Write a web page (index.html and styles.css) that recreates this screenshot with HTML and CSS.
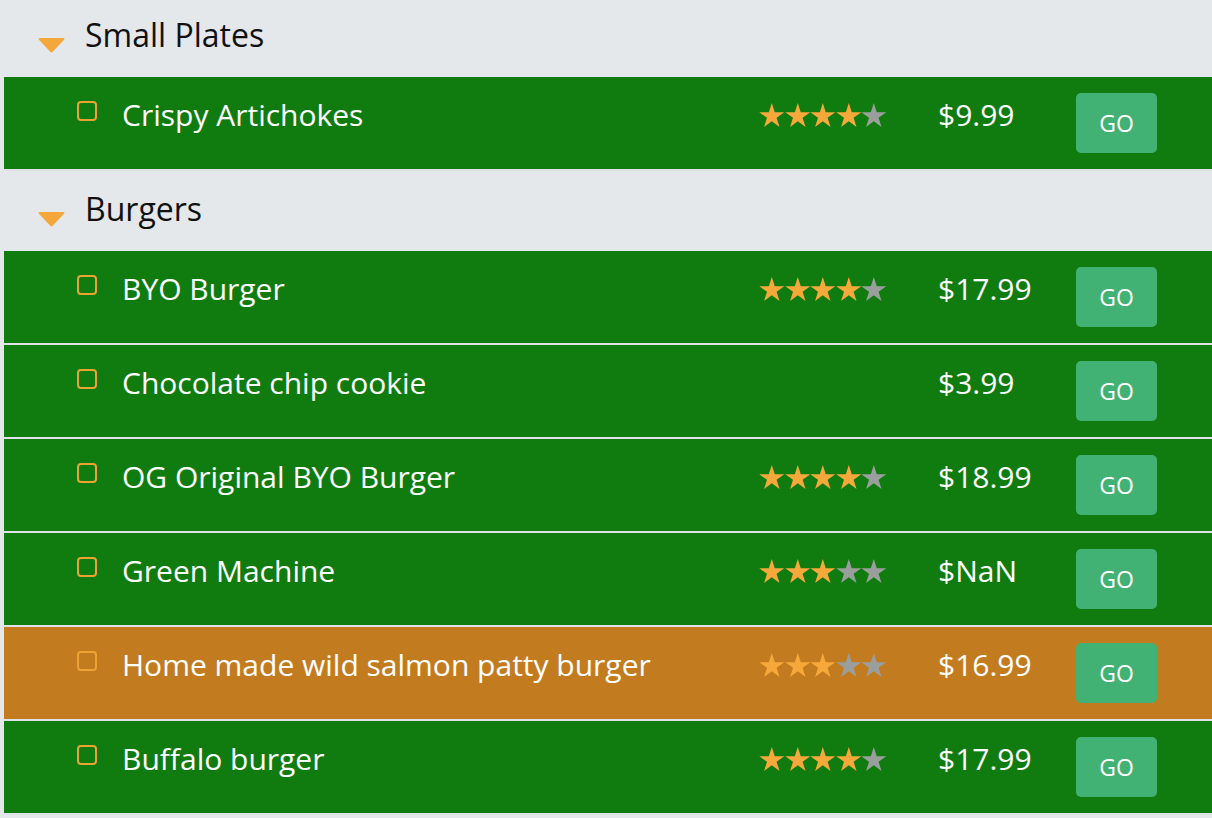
FILE: index.html
```html
<!DOCTYPE html>
<html lang="en">
<head>
    <meta charset="UTF-8">
    <title>Menu</title>
    <link rel="stylesheet" href="styles.css">
</head>
<body>

<svg class="defs" width="0" height="0">
    <symbol id="star" viewBox="0 0 25.6 24.4">
        <polygon points="12.8,0.1 15.81,9.36 25.54,9.36 17.67,15.08 20.68,24.34 12.8,18.62 4.92,24.34 7.93,15.08 0.06,9.36 9.79,9.36"/>
    </symbol>
    <symbol id="caret" viewBox="0 0 27 15">
        <path d="M2 0 H25 Q27.5 0 25.8 1.9 L14.8 13.8 Q13.5 15.1 12.2 13.8 L1.2 1.9 Q-0.5 0 2 0 Z"/>
    </symbol>
</svg>

<div class="menu">
    <div class="category">
        <svg class="caret"><use href="#caret"/></svg>
        <span class="category-title">Small Plates</span>
    </div>
    <div class="item">
        <span class="check"></span>
        <span class="name">Crispy Artichokes</span>
        <span class="rating">
            <svg class="on"><use href="#star"/></svg><svg class="on"><use href="#star"/></svg><svg class="on"><use href="#star"/></svg><svg class="on"><use href="#star"/></svg><svg class="off"><use href="#star"/></svg>
        </span>
        <span class="price">$9.99</span>
        <button class="go">GO</button>
    </div>

    <div class="category">
        <svg class="caret"><use href="#caret"/></svg>
        <span class="category-title">Burgers</span>
    </div>
    <div class="item">
        <span class="check"></span>
        <span class="name">BYO Burger</span>
        <span class="rating">
            <svg class="on"><use href="#star"/></svg><svg class="on"><use href="#star"/></svg><svg class="on"><use href="#star"/></svg><svg class="on"><use href="#star"/></svg><svg class="off"><use href="#star"/></svg>
        </span>
        <span class="price">$17.99</span>
        <button class="go">GO</button>
    </div>
    <div class="item">
        <span class="check"></span>
        <span class="name">Chocolate chip cookie</span>
        <span class="rating"></span>
        <span class="price">$3.99</span>
        <button class="go">GO</button>
    </div>
    <div class="item">
        <span class="check"></span>
        <span class="name">OG Original BYO Burger</span>
        <span class="rating">
            <svg class="on"><use href="#star"/></svg><svg class="on"><use href="#star"/></svg><svg class="on"><use href="#star"/></svg><svg class="on"><use href="#star"/></svg><svg class="off"><use href="#star"/></svg>
        </span>
        <span class="price">$18.99</span>
        <button class="go">GO</button>
    </div>
    <div class="item">
        <span class="check"></span>
        <span class="name">Green Machine</span>
        <span class="rating">
            <svg class="on"><use href="#star"/></svg><svg class="on"><use href="#star"/></svg><svg class="on"><use href="#star"/></svg><svg class="off"><use href="#star"/></svg><svg class="off"><use href="#star"/></svg>
        </span>
        <span class="price">$NaN</span>
        <button class="go">GO</button>
    </div>
    <div class="item item-warn">
        <span class="check"></span>
        <span class="name">Home made wild salmon patty burger</span>
        <span class="rating">
            <svg class="on"><use href="#star"/></svg><svg class="on"><use href="#star"/></svg><svg class="on"><use href="#star"/></svg><svg class="off"><use href="#star"/></svg><svg class="off"><use href="#star"/></svg>
        </span>
        <span class="price">$16.99</span>
        <button class="go">GO</button>
    </div>
    <div class="item">
        <span class="check"></span>
        <span class="name">Buffalo burger</span>
        <span class="rating">
            <svg class="on"><use href="#star"/></svg><svg class="on"><use href="#star"/></svg><svg class="on"><use href="#star"/></svg><svg class="on"><use href="#star"/></svg><svg class="off"><use href="#star"/></svg>
        </span>
        <span class="price">$17.99</span>
        <button class="go">GO</button>
    </div>
</div>

</body>
</html>
```

FILE: styles.css
```css
body {
    font-family: 'Open Sans', 'Noto Sans', sans-serif;
    background-color: #e4e8eb;
    margin: 0;
    padding: 0;
    overflow: hidden;
}
.defs {
    position: absolute;
    width: 0;
    height: 0;
}
.menu {
    margin: -3px 0 0 4px;
}
.category {
    display: flex;
    align-items: center;
    height: 80px;
    padding-left: 34px;
    background-color: #e4e8eb;
}
.caret {
    width: 27px;
    height: 15px;
    margin-top: 16px;
    margin-right: 20px;
    fill: #f4a83c;
}
.category-title {
    margin-bottom: 5px;
    font-size: 32px;
    color: #111;
}
.item {
    display: flex;
    align-items: flex-start;
    box-sizing: border-box;
    height: 94px;
    padding: 16px 55px 0 73px;
    background-color: #107c10;
    border-bottom: 2px solid #dfe3e5;
    color: #ffffff;
}
.item-warn {
    background-color: #c27c1f;
}
.check {
    box-sizing: border-box;
    width: 20px;
    height: 20px;
    margin-top: 8px;
    border: 2px solid #eca234;
    border-radius: 4px;
}
.name {
    flex: 1;
    margin: 2px 0 0 25px;
    font-size: 30px;
    line-height: 40px;
}
.rating {
    display: flex;
    width: 128px;
    margin: 10px 51px 0 0;
}
.rating svg {
    width: 25.6px;
    height: 24px;
}
.rating .on {
    fill: #f6a83a;
}
.rating .off {
    fill: #9a9f9d;
}
.price {
    width: 138px;
    margin-top: 2px;
    font-size: 30px;
    line-height: 40px;
}
.go {
    width: 81px;
    height: 60px;
    padding: 0;
    border: none;
    border-radius: 5px;
    background-color: #41b273;
    color: #ffffff;
    font-family: 'Open Sans', sans-serif;
    font-size: 23px;
    cursor: pointer;
}
```
